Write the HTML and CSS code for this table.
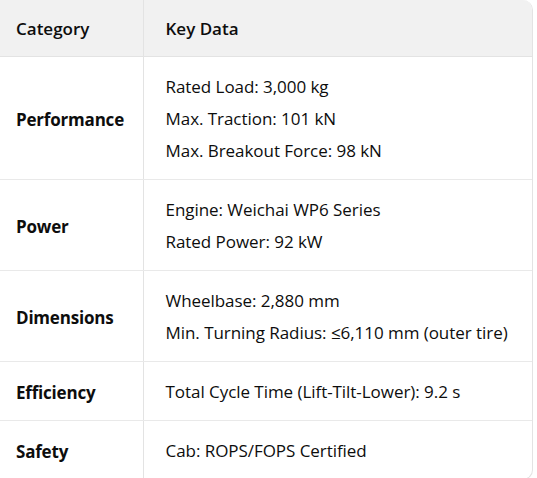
FILE: index.html
```html
<!DOCTYPE html>
<html>
<head>
<meta charset="utf-8">
<link rel="stylesheet" href="styles.css">
</head>
<body>
<div class="wrap">
<table class="spec">
  <thead>
    <tr><th class="c1">Category</th><th class="c2">Key Data</th></tr>
  </thead>
  <tbody>
    <tr>
      <td class="c1 cat">Performance</td>
      <td class="c2"><div class="ln">Rated Load: 3,000 kg</div><div class="ln">Max. Traction: 101 kN</div><div class="ln">Max. Breakout Force: 98 kN</div></td>
    </tr>
    <tr>
      <td class="c1 cat">Power</td>
      <td class="c2"><div class="ln">Engine: Weichai WP6 Series</div><div class="ln">Rated Power: 92 kW</div></td>
    </tr>
    <tr>
      <td class="c1 cat">Dimensions</td>
      <td class="c2"><div class="ln">Wheelbase: 2,880 mm</div><div class="ln">Min. Turning Radius: ≤6,110 mm (outer tire)</div></td>
    </tr>
    <tr>
      <td class="c1 cat">Efficiency</td>
      <td class="c2"><div class="ln">Total Cycle Time (Lift-Tilt-Lower): 9.2 s</div></td>
    </tr>
    <tr>
      <td class="c1 cat">Safety</td>
      <td class="c2"><div class="ln">Cab: ROPS/FOPS Certified</div></td>
    </tr>
  </tbody>
</table>
</div>
</body>
</html>
```
FILE: styles.css
```css
html, body {
  margin: 0;
  padding: 0;
  background: #ffffff;
}
body {
  font-family: "Open Sans", "Noto Sans", sans-serif;
  font-size: 17px;
  color: #0d0d0d;
  overflow: hidden;
}
.wrap {
  margin-left: -6px;
  width: 539px;
  border: 1px solid #e3e3e3;
  border-top: none;
  border-radius: 0 10px 10px 0;
  overflow: hidden;
  box-sizing: border-box;
}
.spec {
  width: 100%;
  border-collapse: collapse;
}
th {
  background: #f1f1f1;
  text-align: left;
  font-weight: 600;
  height: 56px;
  padding: 0;
  border-bottom: 1px solid #e3e3e3;
}
th.c1, td.c1 {
  width: 148px;
  padding-left: 21px;
  box-sizing: border-box;
  border-right: 1px solid #e3e3e3;
}
th.c2, td.c2 {
  padding-left: 22px;
}
td {
  padding-top: 14px;
  padding-bottom: 12px;
  border-bottom: 1px solid #e9e9e9;
  vertical-align: middle;
}
.c2 .ln {
  letter-spacing: -0.05px;
}
tr:last-child td {
  border-bottom: none;
}
.cat {
  font-weight: 700;
  letter-spacing: -0.2px;
}
.ln {
  line-height: 32px;
}
```
